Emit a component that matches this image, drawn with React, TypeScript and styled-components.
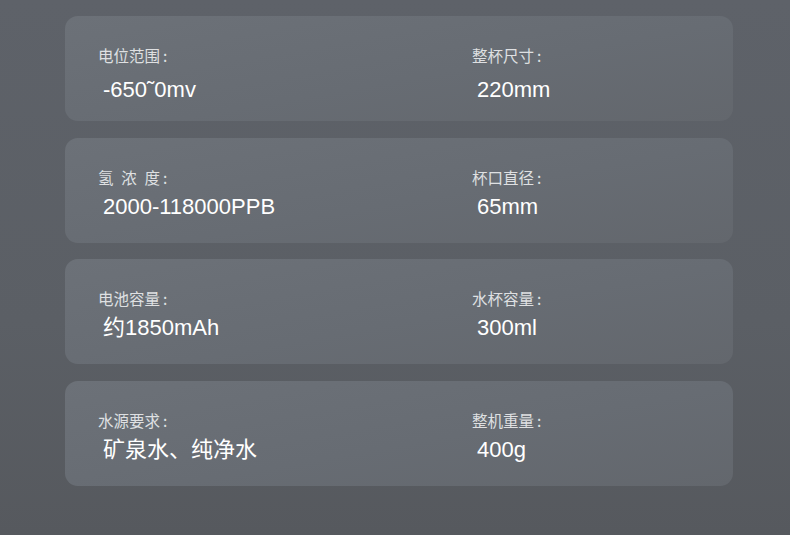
import { createGlobalStyle, styled } from "styled-components";

const GlobalStyle = createGlobalStyle`
  html, body {
    margin: 0;
    padding: 0;
  }
  body {
    width: 790px;
    height: 535px;
    overflow: hidden;
  }
`;

type Spec = { label: string; value: string };

const rows: [Spec, Spec][] = [
  [
    { label: "电位范围", value: "-650˜0mv" },
    { label: "整杯尺寸", value: "220mm" },
  ],
  [
    { label: "氢\u2002浓\u2002度", value: "2000-118000PPB" },
    { label: "杯口直径", value: "65mm" },
  ],
  [
    { label: "电池容量", value: "约1850mAh" },
    { label: "水杯容量", value: "300ml" },
  ],
  [
    { label: "水源要求", value: "矿泉水、纯净水" },
    { label: "整机重量", value: "400g" },
  ],
];

export default function App() {
  return (
    <>
      <GlobalStyle />
      <Page>
        {rows.map((row, i) => (
          <Card key={i}>
            {row.map((spec) => (
              <Cell key={spec.label}>
                <Label>
                  {spec.label}
                  <Colon>:</Colon>
                </Label>
                <Value $first={i === 0}>{spec.value}</Value>
              </Cell>
            ))}
          </Card>
        ))}
      </Page>
    </>
  );
}

const Page = styled.div`
  width: 790px;
  height: 535px;
  box-sizing: border-box;
  padding: 16px 57px 0 65px;
  background: linear-gradient(180deg, #5e6269 0%, #5b5f65 60%, #56595e 100%);
  display: flex;
  flex-direction: column;
  gap: 16.5px;
`;

const Card = styled.div`
  height: 105px;
  box-sizing: border-box;
  border-radius: 13px;
  background: linear-gradient(170deg, #6c7178 0%, #676c73 55%, #63676d 100%);
  padding: 29px 0 0 33px;
  display: grid;
  grid-template-columns: 374px 1fr;
  align-items: start;
`;

const Cell = styled.div`
  display: flex;
  flex-direction: column;
`;

const Label = styled.div`
  font-family: "Noto Sans CJK SC", "Liberation Sans", sans-serif;
  font-size: 15.5px;
  line-height: 20px;
  color: #dfe0e2;
`;

const Colon = styled.span`
  margin-left: 3px;
`;

const Value = styled.div<{ $first?: boolean }>`
  margin-top: ${(p) => (p.$first ? "12px" : "7px")};
  font-family: "Liberation Sans", "Noto Sans CJK SC", sans-serif;
  font-size: 22px;
  line-height: 26px;
  color: #ffffff;
  padding-left: 5px;
`;
